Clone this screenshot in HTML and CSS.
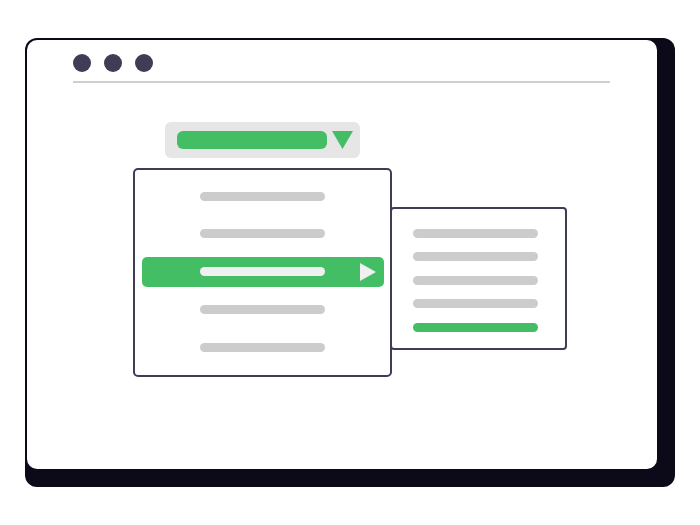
FILE: index.html
```html
<!DOCTYPE html>
<html>

<head>
    <meta charset="UTF-8">
    <title>Dropdown menu</title>
    <link rel="stylesheet" href="styles.css">
</head>

<body>
    <div class="frame">
        <div class="window">
            <div class="dots">
                <span class="dot"></span>
                <span class="dot"></span>
                <span class="dot"></span>
            </div>
            <div class="rule"></div>

            <div class="select">
                <div class="select-value"></div>
                <svg class="arrow-down" width="21" height="18" viewBox="0 0 21 18">
                    <polygon points="0,0 21,0 10.5,18" />
                </svg>
            </div>

            <div class="menu">
                <div class="item"><span class="bar"></span></div>
                <div class="item"><span class="bar"></span></div>
                <div class="item active">
                    <span class="bar"></span>
                    <svg class="arrow-right" width="16" height="18" viewBox="0 0 16 18">
                        <polygon points="0,0 16,9 0,18" />
                    </svg>
                </div>
                <div class="item"><span class="bar"></span></div>
                <div class="item"><span class="bar"></span></div>

                <div class="submenu">
                    <span class="bar"></span>
                    <span class="bar"></span>
                    <span class="bar"></span>
                    <span class="bar"></span>
                    <span class="bar selected"></span>
                </div>
            </div>
        </div>
    </div>
</body>

</html>
```

FILE: styles.css
```css
body {
    margin: 0;
    background: #fff;
}

/* dark backing shape behind the browser window */
.frame {
    box-sizing: border-box;
    width: 650px;
    height: 449px;
    margin: 38px 0 0 25px;
    padding: 2px 18px 18px 2px;
    background: #0c0a18;
    border-radius: 12px;
}

.window {
    box-sizing: border-box;
    width: 630px;
    height: 429px;
    padding: 14px 0 0 46px;
    background: #fff;
    border-radius: 10px;
}

.dots {
    display: flex;
    gap: 13px;
}

.dot {
    width: 18px;
    height: 18px;
    border-radius: 50%;
    background: #3f3d56;
}

.rule {
    width: 537px;
    height: 2px;
    margin-top: 9px;
    background: #cfcfcf;
}

.select {
    box-sizing: border-box;
    display: flex;
    align-items: center;
    width: 195px;
    height: 36px;
    margin: 39px 0 0 92px;
    padding: 0 7px 0 12px;
    background: #e6e6e6;
    border-radius: 6px;
}

.select-value {
    width: 150px;
    height: 18px;
    background: #43be65;
    border-radius: 6px;
}

.arrow-down {
    margin-left: 5px;
    fill: #43be65;
}

.menu {
    position: relative;
    box-sizing: border-box;
    display: flex;
    flex-direction: column;
    gap: 7.75px;
    width: 259px;
    height: 209px;
    margin: 10px 0 0 60px;
    padding: 11px 6px 13px 7px;
    background: #fff;
    border: 2px solid #3f3d56;
    border-radius: 5px;
}

.item {
    box-sizing: border-box;
    display: flex;
    align-items: center;
    height: 30px;
    padding: 0 8px 0 58px;
    border-radius: 5px;
}

.bar {
    display: block;
    width: 125px;
    height: 9px;
    background: #cccccc;
    border-radius: 5px;
}

.item.active {
    background: #43be65;
}

.item.active .bar {
    background: #f0f0f0;
}

.arrow-right {
    margin-left: auto;
    fill: #f0f0f0;
}

/* flyout that sits on top of the menu's right edge */
.submenu {
    position: absolute;
    left: 255px;
    top: 37px;
    box-sizing: border-box;
    display: flex;
    flex-direction: column;
    gap: 14.5px;
    width: 177px;
    height: 143px;
    padding: 19.5px 0 0 21px;
    background: #fff;
    border: 2px solid #3f3d56;
    border-radius: 4px;
}

.submenu .selected {
    background: #43be65;
}
```
